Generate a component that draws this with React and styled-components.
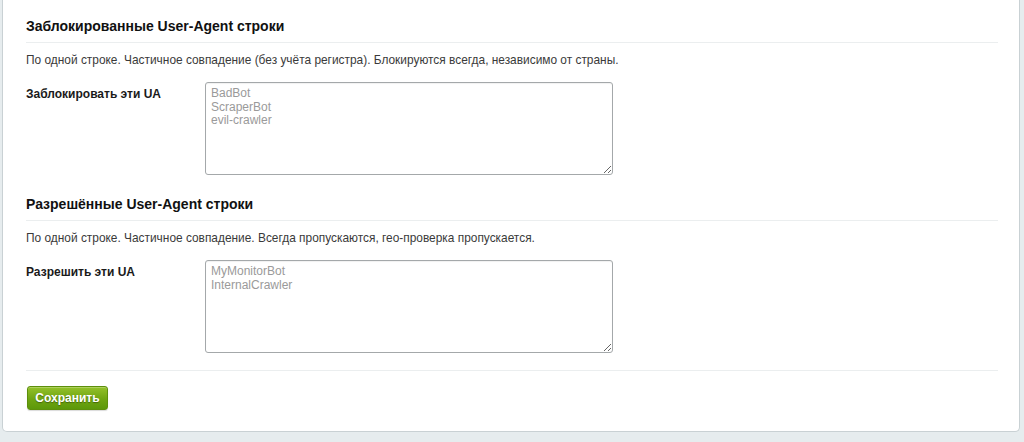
import React from "react";
import styled, { createGlobalStyle } from "styled-components";

const GlobalStyle = createGlobalStyle`
  html, body {
    margin: 0;
    padding: 0;
    background: #e6ecee;
    font-family: "Liberation Sans", Arial, sans-serif;
    color: #222;
  }
`;

const sections = [
  {
    title: "Заблокированные User-Agent строки",
    hint: "По одной строке. Частичное совпадение (без учёта регистра). Блокируются всегда, независимо от страны.",
    label: "Заблокировать эти UA",
    placeholder: "BadBot\nScraperBot\nevil-crawler"
  },
  {
    title: "Разрешённые User-Agent строки",
    hint: "По одной строке. Частичное совпадение. Всегда пропускаются, гео-проверка пропускается.",
    label: "Разрешить эти UA",
    placeholder: "MyMonitorBot\nInternalCrawler"
  }
];

const App = () => (
  <>
    <GlobalStyle />
    <Page>
      <Panel>
        {sections.map((s, i) => (
          <Section key={s.title} $last={i === sections.length - 1}>
            <Title>{s.title}</Title>
            <Hint>{s.hint}</Hint>
            <FieldRow>
              <Label>{s.label}</Label>
              <Area placeholder={s.placeholder} />
            </FieldRow>
          </Section>
        ))}
        <Footer>
          <SaveButton type="button">Сохранить</SaveButton>
        </Footer>
      </Panel>
    </Page>
  </>
);

export default App;

const Page = styled.div`
  padding: 0 4px 10px 2px;
`;

const Panel = styled.div`
  background: #fff;
  border: 1px solid #c9d1d4;
  border-top: none;
  border-radius: 0 0 5px 5px;
  padding: 16px 21px 21px 23px;
`;

const Section = styled.div`
  margin-bottom: ${p => (p.$last ? "17px" : "19px")};
`;

const Title = styled.h2`
  margin: 0;
  font-size: 14px;
  line-height: 20px;
  font-weight: bold;
  color: #111;
  padding-bottom: 6px;
  border-bottom: 1px solid #ebeeef;
`;

const Hint = styled.p`
  margin: 9px 0 0;
  font-size: 11.9px;
  line-height: 16px;
  color: #3a3a3a;
`;

const FieldRow = styled.div`
  display: flex;
  align-items: flex-start;
  margin-top: 14px;
`;

const Label = styled.label`
  width: 179px;
  flex-shrink: 0;
  padding-top: 4px;
  font-size: 12px;
  line-height: 16px;
  font-weight: bold;
  color: #1a1a1a;
`;

const Area = styled.textarea`
  box-sizing: border-box;
  width: 408px;
  height: 93px;
  margin: 0;
  padding: 4px 5px;
  border: 1px solid #a4a8aa;
  border-radius: 3px;
  box-shadow: inset 0 1px 1px rgba(0, 0, 0, 0.06);
  font-family: "Liberation Sans", Arial, sans-serif;
  font-size: 12px;
  line-height: 13.5px;
  color: #333;
  outline: none;

  &::placeholder {
    color: #9a9a9a;
  }
`;

const Footer = styled.div`
  border-top: 1px solid #ebeeef;
  padding-top: 15px;
`;

const SaveButton = styled.button`
  height: 24px;
  width: 81px;
  margin-left: 1px;
  padding: 0;
  border: 1px solid #5d8f0c;
  border-radius: 3px;
  background: linear-gradient(to bottom, #94c12a 0%, #6fa512 55%, #5c980a 100%);
  box-shadow: 0 1px 1px rgba(0, 0, 0, 0.15), inset 0 1px 0 rgba(255, 255, 255, 0.25);
  color: #fff;
  font-family: "Liberation Sans", Arial, sans-serif;
  font-size: 12px;
  font-weight: bold;
  text-shadow: 0 1px 1px rgba(0, 0, 0, 0.35);
  cursor: pointer;
`;
